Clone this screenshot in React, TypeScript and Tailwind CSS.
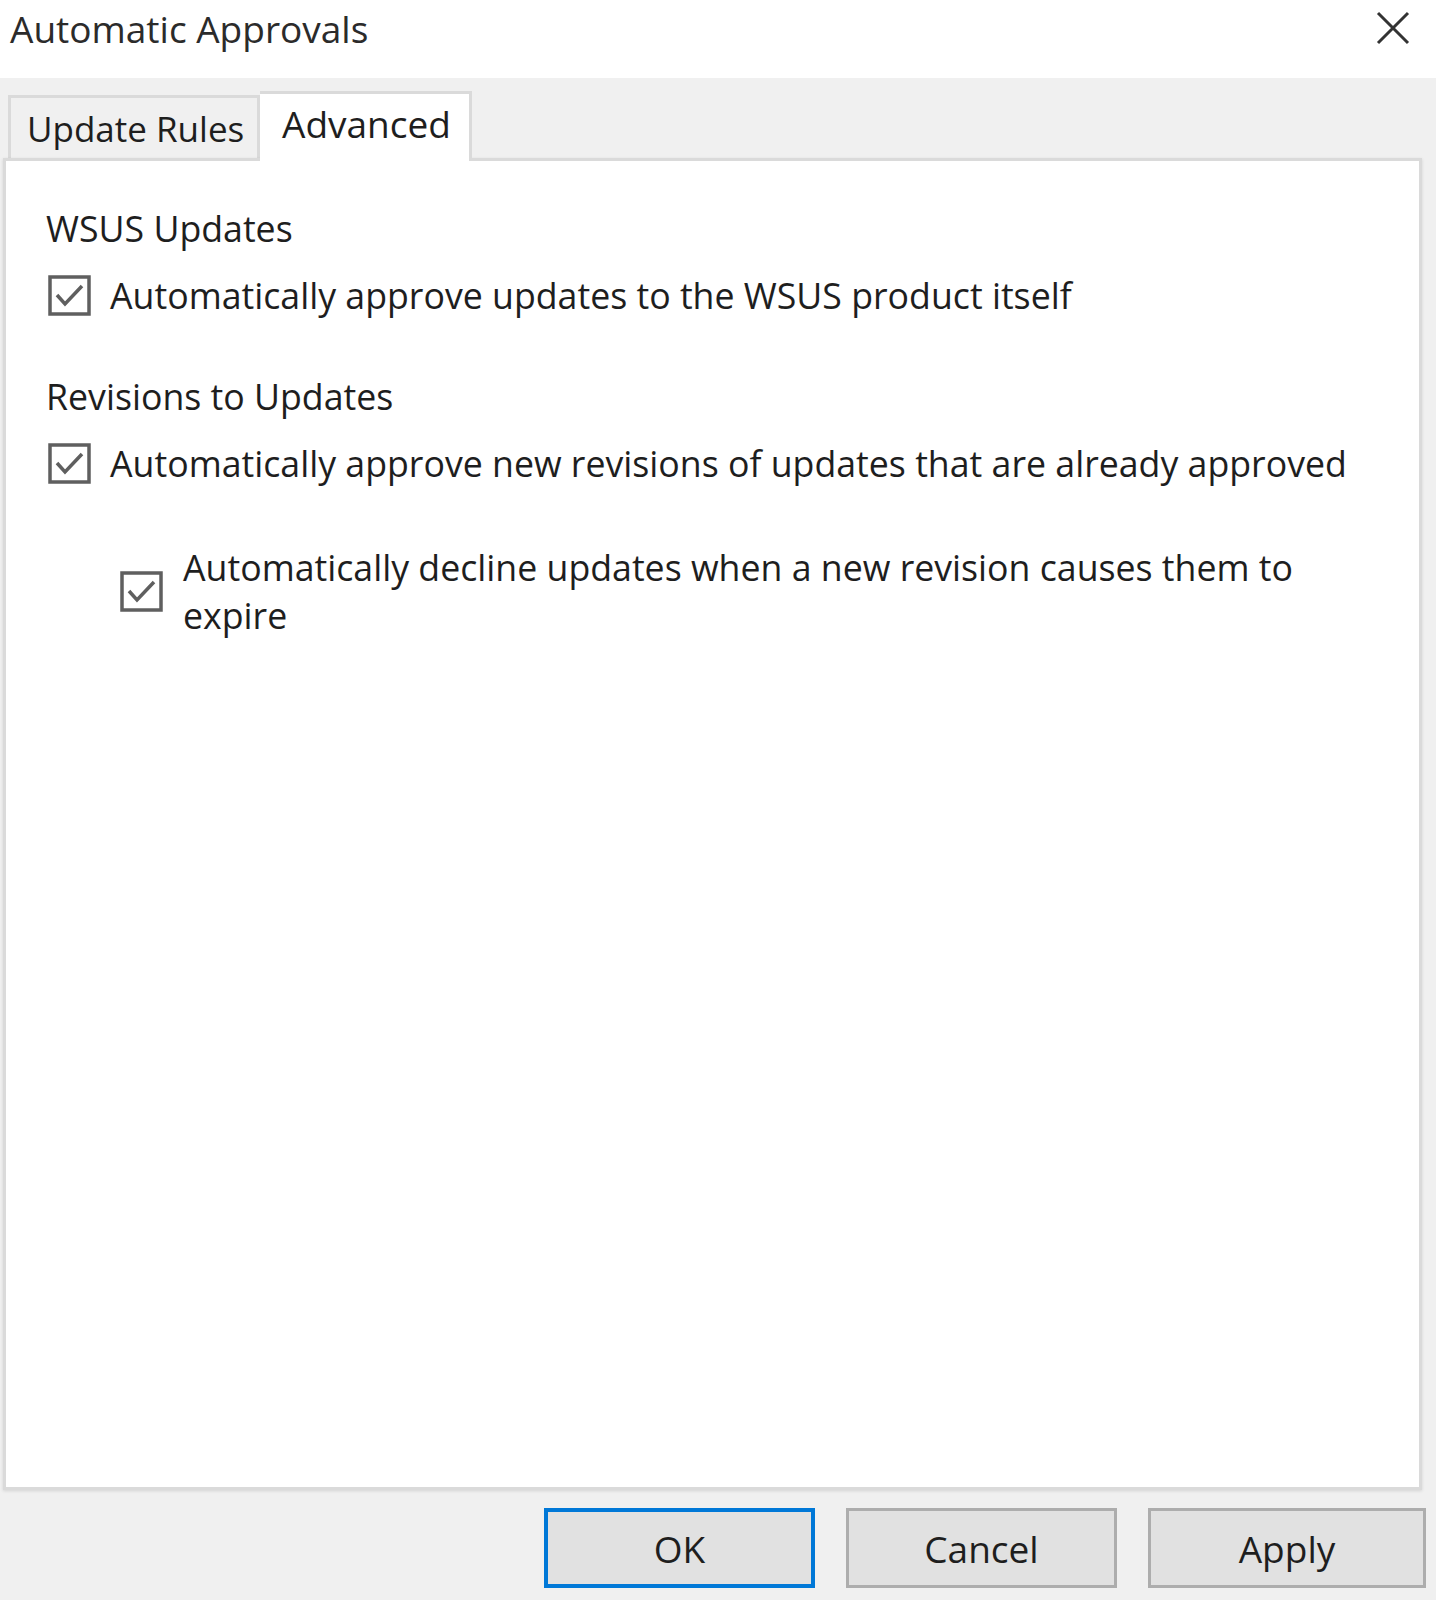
import React from 'react'

const font = { fontFamily: '"Open Sans", "Noto Sans", sans-serif' }

function CheckBox() {
    return (
        <svg width="43" height="41" viewBox="0 0 43 41" className="shrink-0">
            <rect x="2" y="2" width="39" height="37" fill="#fff" stroke="#5f5f5f" strokeWidth="3.5" />
            <polyline points="9,20 17,29 34,11" fill="none" stroke="#5f5f5f" strokeWidth="3.5" />
        </svg>
    )
}

export default function App() {
    return (
        <div className="w-[1436px] h-[1600px] bg-[#f0f0f0] flex flex-col text-[#1e1e1e] overflow-hidden" style={font}>
            {/* title bar */}
            <div className="h-[78px] bg-white flex items-center justify-between pl-[10px] pr-[26px] shrink-0">
                <span className="text-[37px] leading-none text-[#2b2b2b] -mt-[22px]">Automatic Approvals</span>
                <svg width="34" height="34" viewBox="0 0 34 34" className="-mt-[22px]">
                    <path d="M2 2 L32 32 M32 2 L2 32" stroke="#333" strokeWidth="3" />
                </svg>
            </div>

            {/* tabs */}
            <div className="h-[80px] flex items-end pl-[8px] shrink-0">
                <div className="h-[63px] w-[252px] bg-[#f0f0f0] border-[3px] border-b-0 border-[#dadada] flex items-center pl-[16px] text-[35px] leading-none whitespace-nowrap">
                    Update Rules
                </div>
                <div className="h-[70px] w-[212px] bg-white border-[3px] border-b-0 border-l-0 border-[#dadada] flex items-center pl-[22px] pb-[8px] text-[37px] leading-none relative top-[3px] z-10">
                    Advanced
                </div>
            </div>

            {/* panel */}
            <div className="ml-[3px] w-[1419px] h-[1332px] bg-white border-[3px] border-[#dadada] shadow-[0_1px_3px_rgba(0,0,0,0.12)] shrink-0 pl-[40px] pt-[43px] text-[35.7px]">
                <div className="leading-[48px]">WSUS Updates</div>
                <div className="flex items-center gap-[19px] mt-[19px] ml-[2px]">
                    <CheckBox />
                    <span className="leading-[48px]">Automatically approve updates to the WSUS product itself</span>
                </div>
                <div className="leading-[48px] mt-[53px]">Revisions to Updates</div>
                <div className="flex items-center gap-[19px] mt-[19px] ml-[2px]">
                    <CheckBox />
                    <span className="leading-[48px]">Automatically approve new revisions of updates that are already approved</span>
                </div>
                <div className="flex items-center gap-[20px] mt-[56px] ml-[74px]">
                    <CheckBox />
                    <span className="leading-[48px] w-[1150px]">Automatically decline updates when a new revision causes them to expire</span>
                </div>
            </div>

            {/* buttons */}
            <div className="flex justify-end gap-[31px] pr-[10px] pt-[18px]">
                <button className="w-[271px] h-[80px] bg-[#e1e1e1] border-[4px] border-[#0078d7] text-[37px] leading-none text-[#1e1e1e]">OK</button>
                <button className="w-[271px] h-[80px] bg-[#e1e1e1] border-[3px] border-[#adadad] text-[37px] leading-none text-[#1e1e1e]">Cancel</button>
                <button className="w-[278px] h-[80px] bg-[#e1e1e1] border-[3px] border-[#adadad] text-[37px] leading-none text-[#1e1e1e]">Apply</button>
            </div>
        </div>
    )
}
